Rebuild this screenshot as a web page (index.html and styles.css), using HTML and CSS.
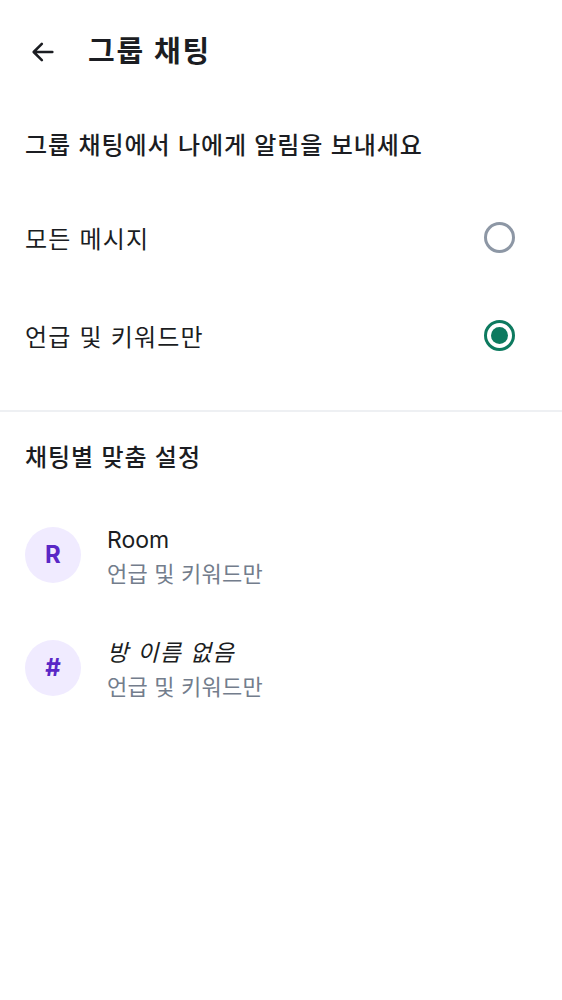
FILE: index.html
```html
<!DOCTYPE html>
<html lang="ko">
<head>
<meta charset="utf-8">
<link rel="stylesheet" href="styles.css">
</head>
<body>
<div class="app">
  <header class="topbar">
    <svg class="back" width="28" height="28" viewBox="0 0 24 24"><path d="M20 12H5M11 5l-7 7 7 7" fill="none" stroke="#1b1d22" stroke-width="2.2" stroke-linecap="round" stroke-linejoin="round"/></svg>
    <h1 class="title">그룹 채팅</h1>
  </header>
  <section class="section">
    <h2 class="section-title">그룹 채팅에서 나에게 알림을 보내세요</h2>
    <div class="option">
      <span class="option-label">모든 메시지</span>
      <span class="radio"></span>
    </div>
    <div class="option">
      <span class="option-label">언급 및 키워드만</span>
      <span class="radio checked"></span>
    </div>
  </section>
  <div class="divider"></div>
  <section class="section">
    <h2 class="section-title second">채팅별 맞춤 설정</h2>
    <div class="rooms">
      <div class="room">
        <div class="avatar">R</div>
        <div class="room-text">
          <div class="room-name">Room</div>
          <div class="room-sub">언급 및 키워드만</div>
        </div>
      </div>
      <div class="room">
        <div class="avatar hash">#</div>
        <div class="room-text">
          <div class="room-name italic">방 이름 없음</div>
          <div class="room-sub">언급 및 키워드만</div>
        </div>
      </div>
    </div>
  </section>
</div>
</body>
</html>
```
FILE: styles.css
```css
* { box-sizing: border-box; margin: 0; padding: 0; }
html, body { background: #fff; }
body {
  font-family: Inter, "Noto Sans CJK KR", sans-serif;
  color: #1b1d22;
}
.app { width: 562px; }
.topbar {
  height: 100px;
  display: flex;
  align-items: center;
  padding-left: 29px;
  padding-top: 3px;
}
.back { display: block; margin-right: 31px; }
.title {
  font-size: 29px;
  font-weight: 600;
  letter-spacing: 1.8px;
  line-height: 1;
}
.section { padding: 0 25px; }
.section-title {
  font-size: 24px;
  font-weight: 500;
  letter-spacing: 0.95px;
  line-height: 1;
  padding-top: 34px;
  height: 89px;
}
.option {
  display: flex;
  align-items: center;
  justify-content: space-between;
  height: 100px;
  margin-top: -2px;
}
.option-label { font-size: 24px; letter-spacing: 1.2px; }
.radio {
  width: 31px;
  height: 31px;
  border-radius: 50%;
  border: 3px solid #8d97a5;
  margin-right: 22px;
  position: relative;
}
.radio.checked { border-color: #0d7a5f; }
.radio.checked::after {
  content: "";
  position: absolute;
  left: 4px; top: 4px;
  width: 17px; height: 17px;
  border-radius: 50%;
  background: #0d7a5f;
}
.divider {
  height: 2px;
  background: #eef0f3;
  margin-top: 25px;
}
.rooms { margin-top: -3px; }
.room {
  display: flex;
  align-items: center;
  height: 113px;
}
.avatar {
  width: 56px;
  height: 56px;
  border-radius: 50%;
  background: #f0ebff;
  color: #5a27c6;
  font-weight: 700;
  font-size: 24px;
  display: flex;
  align-items: center;
  justify-content: center;
  margin-right: 26px;
  flex: none;
}
.room-text { margin-top: 5px; }
.room-name { font-size: 23px; line-height: 33px; }
.room-name.italic { font-style: italic; letter-spacing: 1.3px; }
.room-sub { font-size: 22px; color: #737d8c; line-height: 34px; letter-spacing: 0.2px; }
```
